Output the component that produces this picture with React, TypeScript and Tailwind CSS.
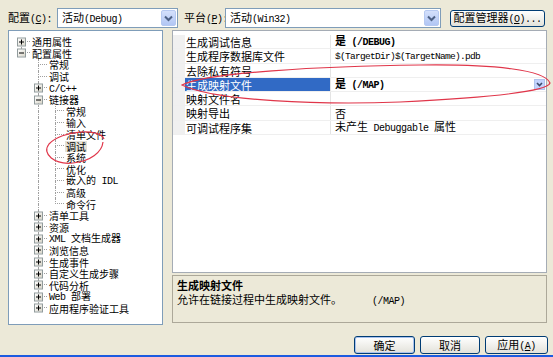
import React from "react";

type TreeNode = {
    label: string;
    level: number;
    box?: "+" | "-";
    first?: boolean;
    last?: boolean;
    selected?: boolean;
};

const treeNodes: TreeNode[] = [
    { label: "通用属性", level: 0, box: "+", first: true },
    { label: "配置属性", level: 0, box: "-", last: true },
    { label: "常规", level: 1 },
    { label: "调试", level: 1 },
    { label: "C/C++", level: 1, box: "+" },
    { label: "链接器", level: 1, box: "-" },
    { label: "常规", level: 2 },
    { label: "输入", level: 2 },
    { label: "清单文件", level: 2 },
    { label: "调试", level: 2, selected: true },
    { label: "系统", level: 2 },
    { label: "优化", level: 2 },
    { label: "嵌入的 IDL", level: 2 },
    { label: "高级", level: 2 },
    { label: "命令行", level: 2, last: true },
    { label: "清单工具", level: 1, box: "+" },
    { label: "资源", level: 1, box: "+" },
    { label: "XML 文档生成器", level: 1, box: "+" },
    { label: "浏览信息", level: 1, box: "+" },
    { label: "生成事件", level: 1, box: "+" },
    { label: "自定义生成步骤", level: 1, box: "+" },
    { label: "代码分析", level: 1, box: "+" },
    { label: "Web 部署", level: 1, box: "+" },
    { label: "应用程序验证工具", level: 1, box: "+", last: true },
];

type Prop = { name: string; value: string; bold?: boolean; selected?: boolean; tight?: boolean };

const props: Prop[] = [
    { name: "生成调试信息", value: "是 (/DEBUG)", bold: true },
    { name: "生成程序数据库文件", value: "$(TargetDir)$(TargetName).pdb", tight: true },
    { name: "去除私有符号", value: "" },
    { name: "生成映射文件", value: "是 (/MAP)", bold: true, selected: true },
    { name: "映射文件名", value: "" },
    { name: "映射导出", value: "否" },
    { name: "可调试程序集", value: "未产生 Debuggable 属性" },
];

// ASCII runs look like the old bitmap SimSun, so give them a courier-ish face
const Mixed = ({ text, tight }: { text: string; tight?: boolean }) => (
    <span className="whitespace-pre">
        {text.split(/([ -~]+)/).map((part, i) =>
            /[ -~]/.test(part) ? (
                <span
                    key={i}
                    className={
                        tight
                            ? "font-['Liberation_Mono',monospace] text-[9.5px] tracking-[-0.7px]"
                            : "font-['Liberation_Mono',monospace] text-[10px] tracking-[-0.5px]"
                    }
                >
                    {part}
                </span>
            ) : (
                part
            )
        )}
    </span>
);

const Chevron = () => (
    <svg width="9" height="7" viewBox="0 0 9 7">
        <path d="M1 1.5 L4.5 5 L8 1.5" fill="none" stroke="#4D6185" strokeWidth="2" />
    </svg>
);

const Combo = ({ text, width }: { text: string; width: string }) => (
    <div className={`flex h-[20px] items-center border border-[#7F9DB9] bg-white ${width}`}>
        <span className="pl-[4px]">
            <Mixed text={text} />
        </span>
        <div className="ml-auto mr-[1px] flex h-[16px] w-[15px] items-center justify-center rounded-[2px] border border-[#B6C9F1] bg-linear-to-b from-[#D4E0FB] to-[#B1C6F4]">
            <Chevron />
        </div>
    </div>
);

const XpButton = ({ children, width, isDefault }: { children: React.ReactNode; width: string; isDefault?: boolean }) => (
    <button
        className={`flex h-full items-center justify-center rounded-[3px] border border-[#003C74] bg-linear-to-b from-white to-[#E3E2DA] text-[11px] ${width} ${
            isDefault ? "shadow-[inset_0_0_0_1px_#A9C2EE]" : ""
        }`}
    >
        <span>{children}</span>
    </button>
);

const Guide = ({ up, down, stub, box }: { up?: boolean; down?: boolean; stub?: boolean; box?: "+" | "-" }) => (
    <div className="relative grid h-full w-[17px] shrink-0 grid-cols-[8px_9px] grid-rows-2">
        <div />
        <div className={`border-dotted border-[#A0A0A0] ${up ? "border-l" : ""} ${stub ? "border-b" : ""}`} />
        <div />
        <div className={`border-dotted border-[#A0A0A0] ${down ? "border-l" : ""}`} />
        {box && (
            <div className="absolute left-[4px] top-1/2 flex h-[9px] w-[9px] -translate-y-1/2 items-center justify-center border border-[#919B9C] bg-linear-to-br from-white to-[#D8D5C8]">
                <div className="relative flex h-[5px] w-[5px] items-center justify-center">
                    <div className="h-[1px] w-[5px] bg-black" />
                    {box === "+" && <div className="absolute left-[2px] top-0 h-[5px] w-[1px] bg-black" />}
                </div>
            </div>
        )}
    </div>
);

function TreeRow({ node }: { node: TreeNode }) {
    // level 2 rows pass the 链接器 branch line (its parent list continues)
    const passes = node.level === 2 ? [false, true] : node.level === 1 ? [false] : [];
    return (
        <div className="flex h-[11.6px] items-center">
            {passes.map((p, i) => (
                <Guide key={i} up={p} down={p} />
            ))}
            <Guide up={!node.first} down={!node.last} stub box={node.box} />
            <span
                className={`ml-[1px] whitespace-nowrap px-[1px] text-[10px] leading-[11px] ${
                    node.selected ? "bg-[#E3E1D8]" : ""
                }`}
            >
                <Mixed text={node.label} />
            </span>
        </div>
    );
}

export default function App() {
    return (
        <div className="relative flex h-[357px] w-[553px] flex-col overflow-hidden bg-[#ECE9D8] font-['Noto_Sans_CJK_SC',sans-serif] text-[11px] text-black">
            {/* top bar */}
            <div className="mt-[8px] flex h-[20px] items-center pl-[8px]">
                <span className="w-[49px] whitespace-nowrap">
                    配置
                    <span className="font-['Liberation_Mono',monospace] text-[10px] tracking-[-0.5px]">
                        (<u>C</u>):
                    </span>
                </span>
                <Combo text="活动(Debug)" width="w-[121px]" />
                <span className="ml-[6px] w-[41px] whitespace-nowrap">
                    平台
                    <span className="font-['Liberation_Mono',monospace] text-[10px] tracking-[-0.5px]">
                        (<u>P</u>):
                    </span>
                </span>
                <Combo text="活动(Win32)" width="w-[216px]" />
                <div className="ml-[9px] h-[17px]">
                    <XpButton width="w-[95px]">
                        配置管理器
                        <span className="font-['Liberation_Mono',monospace] text-[10px] tracking-[-0.5px]">
                            (<u>O</u>)...
                        </span>
                    </XpButton>
                </div>
            </div>

            {/* tree + property grid */}
            <div className="mt-[2px] flex h-[295px] gap-[9px] pl-[8px]">
                <div className="w-[155px] border border-[#7F9DB9] bg-white pl-[4px] pt-[5px]">
                    {treeNodes.map((n, i) => (
                        <TreeRow key={i} node={n} />
                    ))}
                </div>

                <div className="flex w-[375px] flex-col">
                    <div className="h-[243px] border border-[#A5ACB5] bg-white pt-[4px]">
                        {props.map((p, i) => (
                            <div key={i} className="flex h-[14.3px] border-b border-[#EFEFEF] leading-[14px]">
                                <div className="w-[12px] shrink-0 bg-[#F0F0F0]" />
                                <div
                                    className={`w-[146px] shrink-0 whitespace-nowrap border-r border-[#E4E4E4] pl-[1px] ${
                                        p.selected ? "bg-[#316AC5] text-white" : ""
                                    }`}
                                >
                                    {p.name}
                                </div>
                                <div className={`flex flex-1 items-center pl-[4px] ${p.bold ? "font-bold" : ""}`}>
                                    <Mixed text={p.value} tight={p.tight} />
                                    {p.selected && (
                                        <div className="ml-auto mr-[1px] flex h-[11px] w-[11px] items-center justify-center border border-[#B1C5EE] bg-[#C3D3FD]">
                                            <svg width="7" height="5" viewBox="0 0 7 5">
                                                <path d="M1 1 L3.5 3.5 L6 1" fill="none" stroke="#3B4A6B" strokeWidth="1.6" />
                                            </svg>
                                        </div>
                                    )}
                                </div>
                            </div>
                        ))}
                    </div>

                    <div className="mt-[2px] h-[48px] border border-[#ACA899] pl-[4px] pt-[2px]">
                        <p className="font-bold leading-[14px]">生成映射文件</p>
                        <p className="leading-[14px]">
                            允许在链接过程中生成映射文件。
                            <span className="ml-[30px] font-['Liberation_Mono',monospace] text-[10px] tracking-[-0.5px]">(/MAP)</span>
                        </p>
                    </div>
                </div>
            </div>

            {/* dialog buttons */}
            <div className="mt-[11px] flex h-[18px] justify-end gap-[5px] pr-[5px]">
                <XpButton width="w-[61px]" isDefault>
                    确定
                </XpButton>
                <XpButton width="w-[60px]">取消</XpButton>
                <XpButton width="w-[63px]">
                    应用
                    <span className="font-['Liberation_Mono',monospace] text-[10px] tracking-[-0.5px]">
                        (<u>A</u>)
                    </span>
                </XpButton>
            </div>

            <div className="mt-auto h-[2px] bg-[#1C5BE0]" />

            {/* red hand-drawn annotations */}
            <svg className="pointer-events-none absolute inset-0" width="553" height="357" viewBox="0 0 553 357">
                <path
                    d="M104 139 C100 128, 62 130, 49 144 C41 154, 55 165, 73 163 C91 161, 102 152, 103 142"
                    fill="none"
                    stroke="#E0364A"
                    strokeWidth="1.2"
                />
                <path
                    d="M182 85 C205 73, 320 66, 420 65 C495 64, 545 70, 550 83 C548 92, 480 98, 400 102 C320 105, 215 101, 182 85 Z"
                    fill="none"
                    stroke="#E0364A"
                    strokeWidth="1.2"
                />
            </svg>
        </div>
    );
}
